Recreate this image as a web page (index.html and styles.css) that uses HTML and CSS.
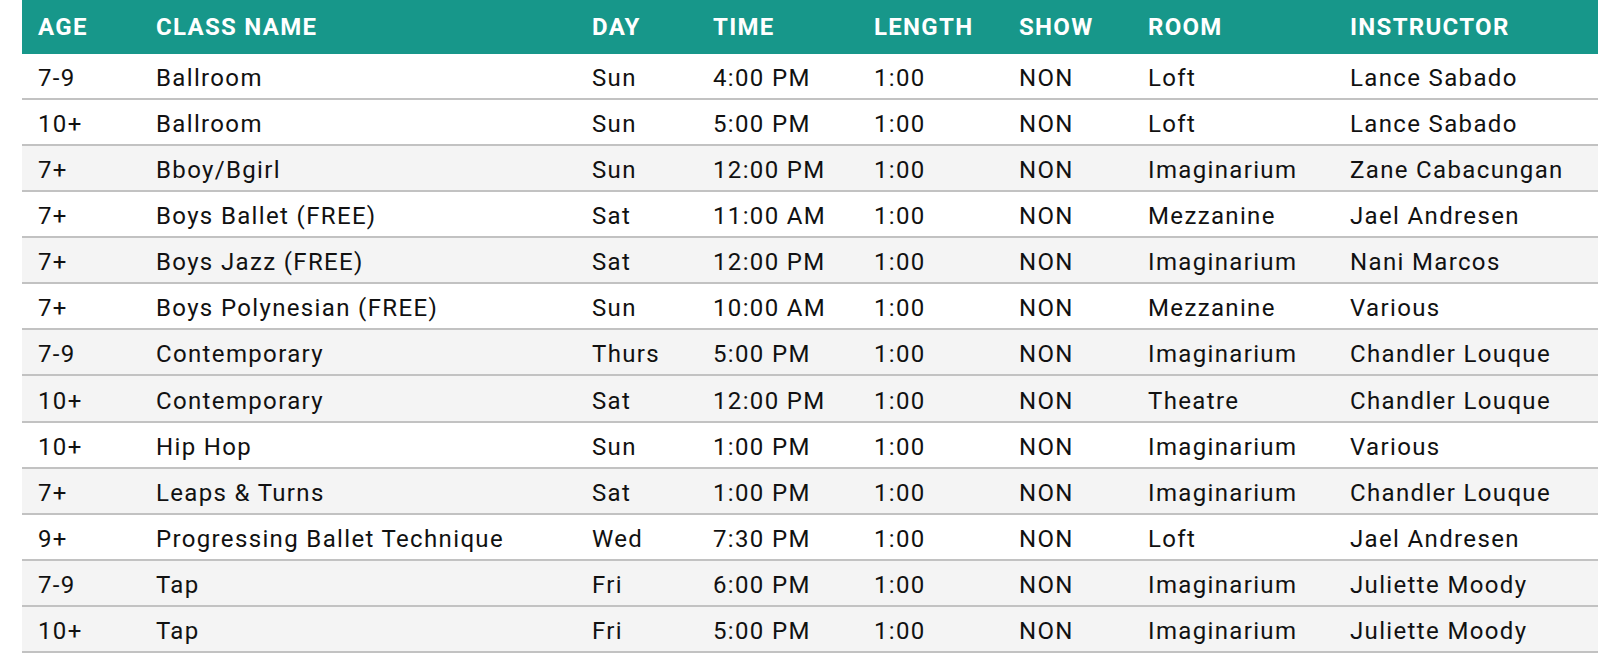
FILE: index.html
```html
<!DOCTYPE html>
<html>
<head>
<meta charset="utf-8">
<link rel="stylesheet" href="styles.css">
</head>
<body>
<div class="schedule">
  <div class="row head">
    <div>AGE</div><div>CLASS NAME</div><div>DAY</div><div>TIME</div><div>LENGTH</div><div>SHOW</div><div>ROOM</div><div>INSTRUCTOR</div>
  </div>
  <div class="row"><div>7-9</div><div>Ballroom</div><div>Sun</div><div>4:00 PM</div><div>1:00</div><div>NON</div><div>Loft</div><div>Lance Sabado</div></div>
  <div class="row"><div>10+</div><div>Ballroom</div><div>Sun</div><div>5:00 PM</div><div>1:00</div><div>NON</div><div>Loft</div><div>Lance Sabado</div></div>
  <div class="row alt"><div>7+</div><div>Bboy/Bgirl</div><div>Sun</div><div>12:00 PM</div><div>1:00</div><div>NON</div><div>Imaginarium</div><div>Zane Cabacungan</div></div>
  <div class="row"><div>7+</div><div>Boys Ballet (FREE)</div><div>Sat</div><div>11:00 AM</div><div>1:00</div><div>NON</div><div>Mezzanine</div><div>Jael Andresen</div></div>
  <div class="row alt"><div>7+</div><div>Boys Jazz (FREE)</div><div>Sat</div><div>12:00 PM</div><div>1:00</div><div>NON</div><div>Imaginarium</div><div>Nani Marcos</div></div>
  <div class="row"><div>7+</div><div>Boys Polynesian (FREE)</div><div>Sun</div><div>10:00 AM</div><div>1:00</div><div>NON</div><div>Mezzanine</div><div>Various</div></div>
  <div class="row alt"><div>7-9</div><div>Contemporary</div><div>Thurs</div><div>5:00 PM</div><div>1:00</div><div>NON</div><div>Imaginarium</div><div>Chandler Louque</div></div>
  <div class="row alt"><div>10+</div><div>Contemporary</div><div>Sat</div><div>12:00 PM</div><div>1:00</div><div>NON</div><div>Theatre</div><div>Chandler Louque</div></div>
  <div class="row"><div>10+</div><div>Hip Hop</div><div>Sun</div><div>1:00 PM</div><div>1:00</div><div>NON</div><div>Imaginarium</div><div>Various</div></div>
  <div class="row alt"><div>7+</div><div>Leaps &amp; Turns</div><div>Sat</div><div>1:00 PM</div><div>1:00</div><div>NON</div><div>Imaginarium</div><div>Chandler Louque</div></div>
  <div class="row"><div>9+</div><div>Progressing Ballet Technique</div><div>Wed</div><div>7:30 PM</div><div>1:00</div><div>NON</div><div>Loft</div><div>Jael Andresen</div></div>
  <div class="row alt"><div>7-9</div><div>Tap</div><div>Fri</div><div>6:00 PM</div><div>1:00</div><div>NON</div><div>Imaginarium</div><div>Juliette Moody</div></div>
  <div class="row alt"><div>10+</div><div>Tap</div><div>Fri</div><div>5:00 PM</div><div>1:00</div><div>NON</div><div>Imaginarium</div><div>Juliette Moody</div></div>
</div>
</body>
</html>
```

FILE: styles.css
```css
html, body {
  margin: 0;
  padding: 0;
  background: #ffffff;
}
body {
  padding-left: 22px;
  font-family: Roboto, "Liberation Sans", sans-serif;
  color: #111111;
}
.schedule {
  width: 1576px;
}
.row {
  display: grid;
  grid-template-columns: 118px 436px 121px 161px 145px 129px 202px 264px;
  align-items: center;
  height: 46.14px;
  box-sizing: border-box;
  border-bottom: 2px solid #c2c2c2;
  font-size: 24px;
  letter-spacing: 1.35px;
  padding-top: 4px;
  background: #ffffff;
}
.row > div {
  padding-left: 16px;
  white-space: nowrap;
}
.row.alt {
  background: #f4f4f4;
}
.row.head {
  height: 53.6px;
  border-bottom: none;
  padding-top: 0;
  letter-spacing: 1.3px;
  background: #17978a;
  color: #ffffff;
  font-weight: 700;
}
```
